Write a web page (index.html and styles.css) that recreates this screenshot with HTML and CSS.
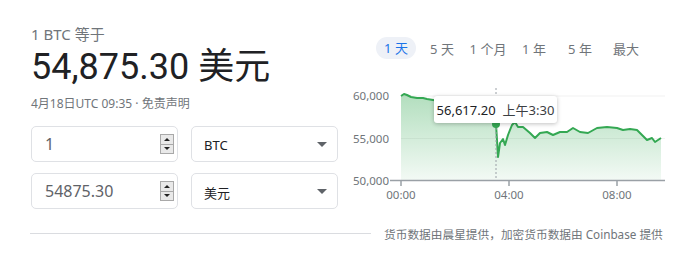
FILE: index.html
```html
<!DOCTYPE html>
<html lang="zh-CN">
<head>
  <meta charset="UTF-8">
  <title>BTC 兑换 美元</title>
  <link rel="stylesheet" href="styles.css">
</head>
<body>
  <div class="card">
    <div class="top">
      <div class="left">
        <div class="label">1 BTC 等于</div>
        <div class="amount">54,875.30 美元</div>
        <div class="date">4月18日UTC 09:35 · 免责声明</div>

        <div class="fields">
          <div class="row">
            <div class="box num">
              <span class="value">1</span>
              <span class="spin"><i class="up"></i><i class="down"></i></span>
            </div>
            <div class="box select">
              <span class="sel-text">BTC</span>
              <span class="caret"></span>
            </div>
          </div>
          <div class="row">
            <div class="box num">
              <span class="value">54875.30</span>
              <span class="spin"><i class="up"></i><i class="down"></i></span>
            </div>
            <div class="box select">
              <span class="sel-text">美元</span>
              <span class="caret"></span>
            </div>
          </div>
        </div>
      </div>

      <div class="right">
        <div class="tabs">
          <span class="tab"><span class="active">1 天</span></span>
          <span class="tab">5 天</span>
          <span class="tab">1 个月</span>
          <span class="tab">1 年</span>
          <span class="tab">5 年</span>
          <span class="tab">最大</span>
        </div>

        <div class="chart">
          <svg width="325" height="120" viewBox="345 85 325 120">
            <defs>
              <linearGradient id="fill" x1="0" y1="0" x2="0" y2="1">
                <stop offset="0" stop-color="#34a853" stop-opacity="0.38"/>
                <stop offset="1" stop-color="#34a853" stop-opacity="0.06"/>
              </linearGradient>
            </defs>
            <line x1="401" y1="96" x2="665" y2="96" stroke="#f1f1f1"/>
            <line x1="401" y1="138.5" x2="665" y2="138.5" stroke="#f1f1f1"/>

            <polygon fill="url(#fill)" points="401,96 404,94 407,95 411,97 417,98 423,98 427,99 433,100 445,102 460,106 475,110 488,116 494,120 496,124 497,140 498,157 500,143 503,139 505,145 508,135 512,125 515,122 518,127 523,127 530,133 535,138 540,133 547,132 553,135 560,132 567,132 573,128 580,132 588,133 597,128 607,127 617,128 623,130 630,129 637,130 642,135 647,140 652,138 655,142 658,140 661,138 661,180 401,180"/>
            <polyline fill="none" stroke="#34a853" stroke-width="2" stroke-linejoin="round" points="401,96 404,94 407,95 411,97 417,98 423,98 427,99 433,100 445,102 460,106 475,110 488,116 494,120 496,124 497,140 498,157 500,143 503,139 505,145 508,135 512,125 515,122 518,127 523,127 530,133 535,138 540,133 547,132 553,135 560,132 567,132 573,128 580,132 588,133 597,128 607,127 617,128 623,130 630,129 637,130 642,135 647,140 652,138 655,142 658,140 661,138"/>

            <line x1="496" y1="88" x2="496" y2="180" stroke="#9aa0a6" stroke-dasharray="2 2"/>
            <circle cx="496" cy="124" r="4" fill="#34a853"/>

            <line x1="390" y1="180.5" x2="665" y2="180.5" stroke="#9aa0a6" stroke-width="1.5"/>
            <line x1="401" y1="180" x2="401" y2="186" stroke="#9aa0a6" stroke-width="1.5"/>
            <line x1="509" y1="180" x2="509" y2="186" stroke="#9aa0a6" stroke-width="1.5"/>
            <line x1="617" y1="180" x2="617" y2="186" stroke="#9aa0a6" stroke-width="1.5"/>

            <g class="ylab">
              <text x="389" y="100">60,000</text>
              <text x="389" y="143">55,000</text>
              <text x="389" y="185">50,000</text>
            </g>
            <g class="xlab">
              <text x="401" y="199">00:00</text>
              <text x="509" y="199">04:00</text>
              <text x="617" y="199">08:00</text>
            </g>
          </svg>
          <div class="tip"><span class="tip-val">56,617.20</span><span class="tip-time">上午3:30</span></div>
        </div>
      </div>
    </div>

    <div class="foot">
      <div class="rule"></div>
      <div class="source">货币数据由晨星提供，加密货币数据由 Coinbase 提供</div>
    </div>
  </div>
</body>
</html>
```

FILE: styles.css
```css
body {
  margin: 0;
  background: #fff;
  font-family: "Noto Sans", "Noto Sans CJK SC", sans-serif;
  color: #202124;
}
.card {
  width: 700px;
  height: 270px;
}
.top {
  display: flex;
}
.left {
  width: 308px;
  padding-left: 31px;
  padding-top: 24px;
}
.label {
  font-size: 15px;
  line-height: 20px;
  color: #70757a;
}
.amount {
  font-family: Roboto, "Noto Sans CJK SC", sans-serif;
  font-size: 36px;
  line-height: 46px;
  color: #202124;
}
.date {
  font-size: 12px;
  line-height: 16px;
  color: #70757a;
  margin-top: 6px;
}
.fields {
  margin-top: 14px;
  display: flex;
  flex-direction: column;
  gap: 11px;
}
.row {
  display: flex;
  gap: 13px;
}
.box {
  box-sizing: border-box;
  width: 147px;
  height: 36px;
  border: 1px solid #dfe1e5;
  border-radius: 5px;
  display: flex;
  align-items: center;
}
.num {
  padding: 0 2px 0 13px;
  justify-content: space-between;
}
.value {
  font-size: 16px;
  color: #5f6368;
}
.spin {
  width: 12px;
  height: 18px;
  border: 1px solid #a9a9a9;
  background: #e9e9e9;
  display: flex;
  flex-direction: column;
  margin-right: 1px;
}
.spin i {
  flex: 1;
  position: relative;
}
.spin .up {
  border-bottom: 1px solid #a9a9a9;
}
.spin i:after {
  content: "";
  position: absolute;
  left: 3px;
  top: 3px;
  border-left: 3px solid transparent;
  border-right: 3px solid transparent;
}
.spin .up:after {
  border-bottom: 3px solid #222;
}
.spin .down:after {
  top: 2px;
  border-top: 3px solid #222;
}
.select {
  padding: 0 10px 0 12px;
  justify-content: space-between;
}
.sel-text {
  font-size: 13px;
  color: #202124;
  padding-top: 2px;
}
.caret {
  width: 0;
  height: 0;
  border-left: 5px solid transparent;
  border-right: 5px solid transparent;
  border-top: 5px solid #5f6368;
}
.right {
  margin-left: 32px;
  width: 329px;
}
.tabs {
  display: flex;
  padding-top: 37px;
  margin-left: 2px;
}
.tab {
  width: 46px;
  height: 22px;
  display: flex;
  align-items: center;
  justify-content: center;
  font-size: 13px;
  color: #70757a;
}
.tab .active {
  background: #eef1f7;
  color: #1a73e8;
  border-radius: 11px;
  padding: 0 8px;
  line-height: 22px;
}
.chart {
  position: relative;
  margin-top: 26px;
  margin-left: -26px;
  height: 120px;
}
.chart svg {
  display: block;
}
.ylab text {
  font-size: 11.5px;
  fill: #70757a;
  text-anchor: end;
}
.xlab text {
  font-size: 11.5px;
  fill: #70757a;
  text-anchor: middle;
}
.tip {
  position: absolute;
  left: 89px;
  top: 11px;
  width: 123px;
  height: 27px;
  box-sizing: border-box;
  background: #fff;
  border-radius: 3px;
  box-shadow: 0 1px 4px rgba(0, 0, 0, 0.25);
  display: flex;
  align-items: center;
  justify-content: center;
  gap: 7px;
  font-size: 13px;
}
.tip-val {
  color: #202124;
}
.tip-time {
  color: #3c4043;
}
.foot {
  display: flex;
  align-items: center;
  margin-top: 16px;
  padding-left: 30px;
}
.rule {
  width: 341px;
  border-top: 1px solid #dadce0;
}
.source {
  margin-left: 13px;
  font-size: 11.7px;
  color: #70757a;
  white-space: nowrap;
}
```
